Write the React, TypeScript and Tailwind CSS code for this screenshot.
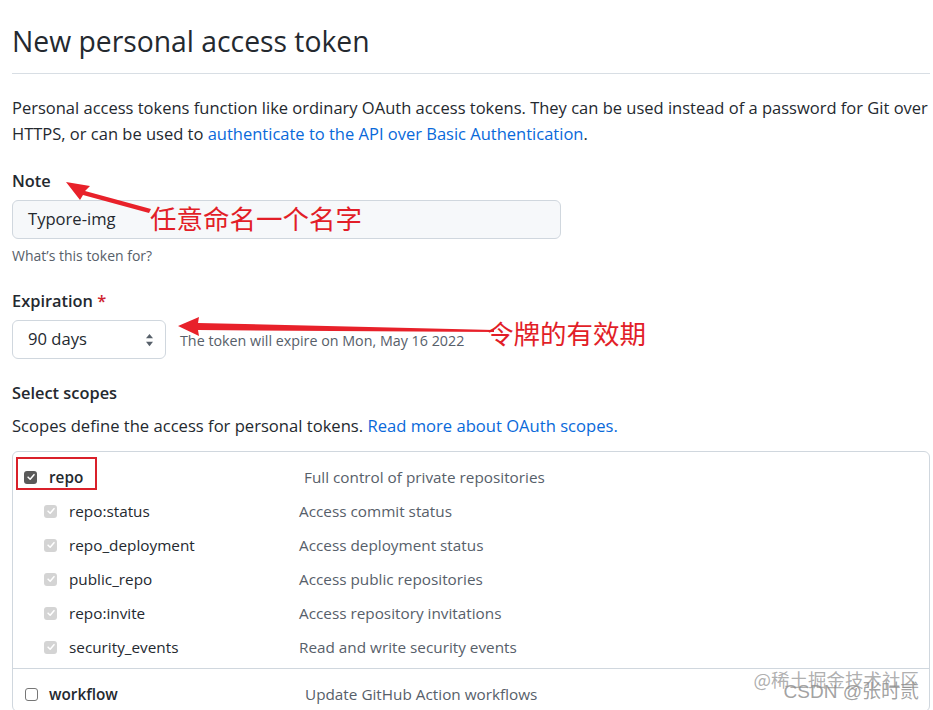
import React from 'react';

const font = { fontFamily: '"Segoe UI", "Open Sans", "Noto Sans CJK SC", sans-serif' };
const cjk = { fontFamily: '"Noto Sans CJK SC", sans-serif' };

const Check = ({ tone }: { tone: 'dark' | 'light' | 'off' }) => {
  if (tone === 'off') {
    return <span className="inline-block w-[13px] h-[13px] rounded-[3px] border border-[#767676] bg-white" />;
  }
  return (
    <span
      className={`inline-flex items-center justify-center w-[13px] h-[13px] rounded-[3px] ${
        tone === 'dark' ? 'bg-[#5a5a5a]' : 'bg-[#d4d4d4]'
      }`}
    >
      <svg viewBox="0 0 12 12" className="w-[10px] h-[10px]" fill="none" stroke="white" strokeWidth={1.8}>
        <path d="M2.5 6.2 L5 8.6 L9.6 3.2" strokeLinecap="round" strokeLinejoin="round" />
      </svg>
    </span>
  );
};

const subs = [
  ['repo:status', 'Access commit status'],
  ['repo_deployment', 'Access deployment status'],
  ['public_repo', 'Access public repositories'],
  ['repo:invite', 'Access repository invitations'],
  ['security_events', 'Read and write security events'],
];

export default function App() {
  return (
    <div className="relative w-[933px] h-[710px] overflow-hidden bg-white text-[#24292f]" style={font}>
      <div className="pl-3 pr-[3px] pt-[23px]">
        <h1 className="text-[28.3px] leading-[36px] font-normal pb-[14px] border-b border-[#d8dee4]">
          New personal access token
        </h1>

        <p className="mt-[21px] text-[16.5px] leading-[26px] whitespace-nowrap">
          Personal access tokens function like ordinary OAuth access tokens. They can be used instead of a password for Git over
          <br />
          HTTPS, or can be used to <a className="text-[#0969da]">authenticate to the API over Basic Authentication</a>.
        </p>

        <div className="mt-[22px] text-[16.4px] leading-[24px] font-semibold">Note</div>
        <div className="mt-[7px] w-[549px] h-[39px] rounded-[6px] border border-[#d0d7de] bg-[#f6f8fa] flex items-center px-[15px] text-[16.6px]">
          Typore-img
        </div>
        <div className="mt-[7px] text-[14px] leading-[20px] text-[#57606a]">What’s this token for?</div>

        <div className="mt-[23px] text-[16.4px] leading-[24px] font-semibold">
          Expiration <span className="text-[#cf222e]">*</span>
        </div>
        <div className="mt-[7px] flex items-center gap-[14px]">
          <div className="w-[154px] h-[39px] rounded-[6px] border border-[#d0d7de] bg-white flex items-center justify-between pl-[15px] pr-[11px] text-[16.6px]">
            <span>90 days</span>
            <svg viewBox="0 0 10 16" className="w-[9px] h-[14px]" fill="#57606a">
              <path d="M5 1 L9 6 H1 Z" />
              <path d="M5 15 L9 10 H1 Z" />
            </svg>
          </div>
          <span className="text-[14.3px] text-[#57606a] mt-[2px]">The token will expire on Mon, May 16 2022</span>
        </div>

        <div className="mt-[22px] text-[16.4px] leading-[24px] font-semibold">Select scopes</div>
        <p className="mt-[9px] text-[16.6px] leading-[24px]">
          Scopes define the access for personal tokens. <a className="text-[#0969da]">Read more about OAuth scopes.</a>
        </p>

        <div className="mt-[13px] rounded-[6px] border border-[#d0d7de] text-[15.3px]">
          <div className="pt-[8px] pb-[4px] border-b border-[#d0d7de]">
            <div className="h-[34px] flex items-center pl-[11px]">
              <Check tone="dark" />
              <span className="w-[267px] pl-[12px] font-semibold">repo</span>
              <span className="text-[#57606a]">Full control of private repositories</span>
            </div>
            {subs.map(([name, desc]) => (
              <div key={name} className="h-[34px] flex items-center pl-[31px]">
                <Check tone="light" />
                <span className="w-[242px] pl-[12px]">{name}</span>
                <span className="text-[#57606a]">{desc}</span>
              </div>
            ))}
          </div>
          <div className="pt-[8px]">
            <div className="h-[34px] flex items-center pl-[12px]">
              <Check tone="off" />
              <span className="w-[267px] pl-[11px] font-semibold">workflow</span>
              <span className="text-[#57606a]">Update GitHub Action workflows</span>
            </div>
          </div>
        </div>
      </div>

      {/* annotations */}
      <div className="absolute left-[16px] top-[457px] w-[81px] h-[33px] border-2 border-[#d9202a]" />
      <svg className="absolute left-0 top-0 pointer-events-none" width="933" height="710">
        <polygon points="66,182 90,186 85,191 151,209 149,213 83,195 80,200" fill="#e8212a" />
        <polygon points="178,326 199,317 198,323 494,330 494,332 198,330 199,336" fill="#e8212a" />
      </svg>
      <div className="absolute left-[150px] top-[200px] text-[26.5px] leading-[36px] text-[#e21e28]" style={cjk}>
        任意命名一个名字
      </div>
      <div className="absolute left-[487px] top-[315px] text-[26.5px] leading-[36px] text-[#e21e28]" style={cjk}>
        令牌的有效期
      </div>

      {/* watermark */}
      <div className="absolute right-[14px] top-[669px] text-[18.5px] leading-[20px] text-[#9a9a9a]/80" style={cjk}>
        @稀土掘金技术社区
      </div>
      <div className="absolute right-[14px] top-[680px] text-[19px] leading-[24px] text-[#8a8a8a]/80" style={{ fontFamily: '"Liberation Sans", "Noto Sans CJK SC", sans-serif' }}>
        CSDN @张时贰
      </div>
    </div>
  );
}
